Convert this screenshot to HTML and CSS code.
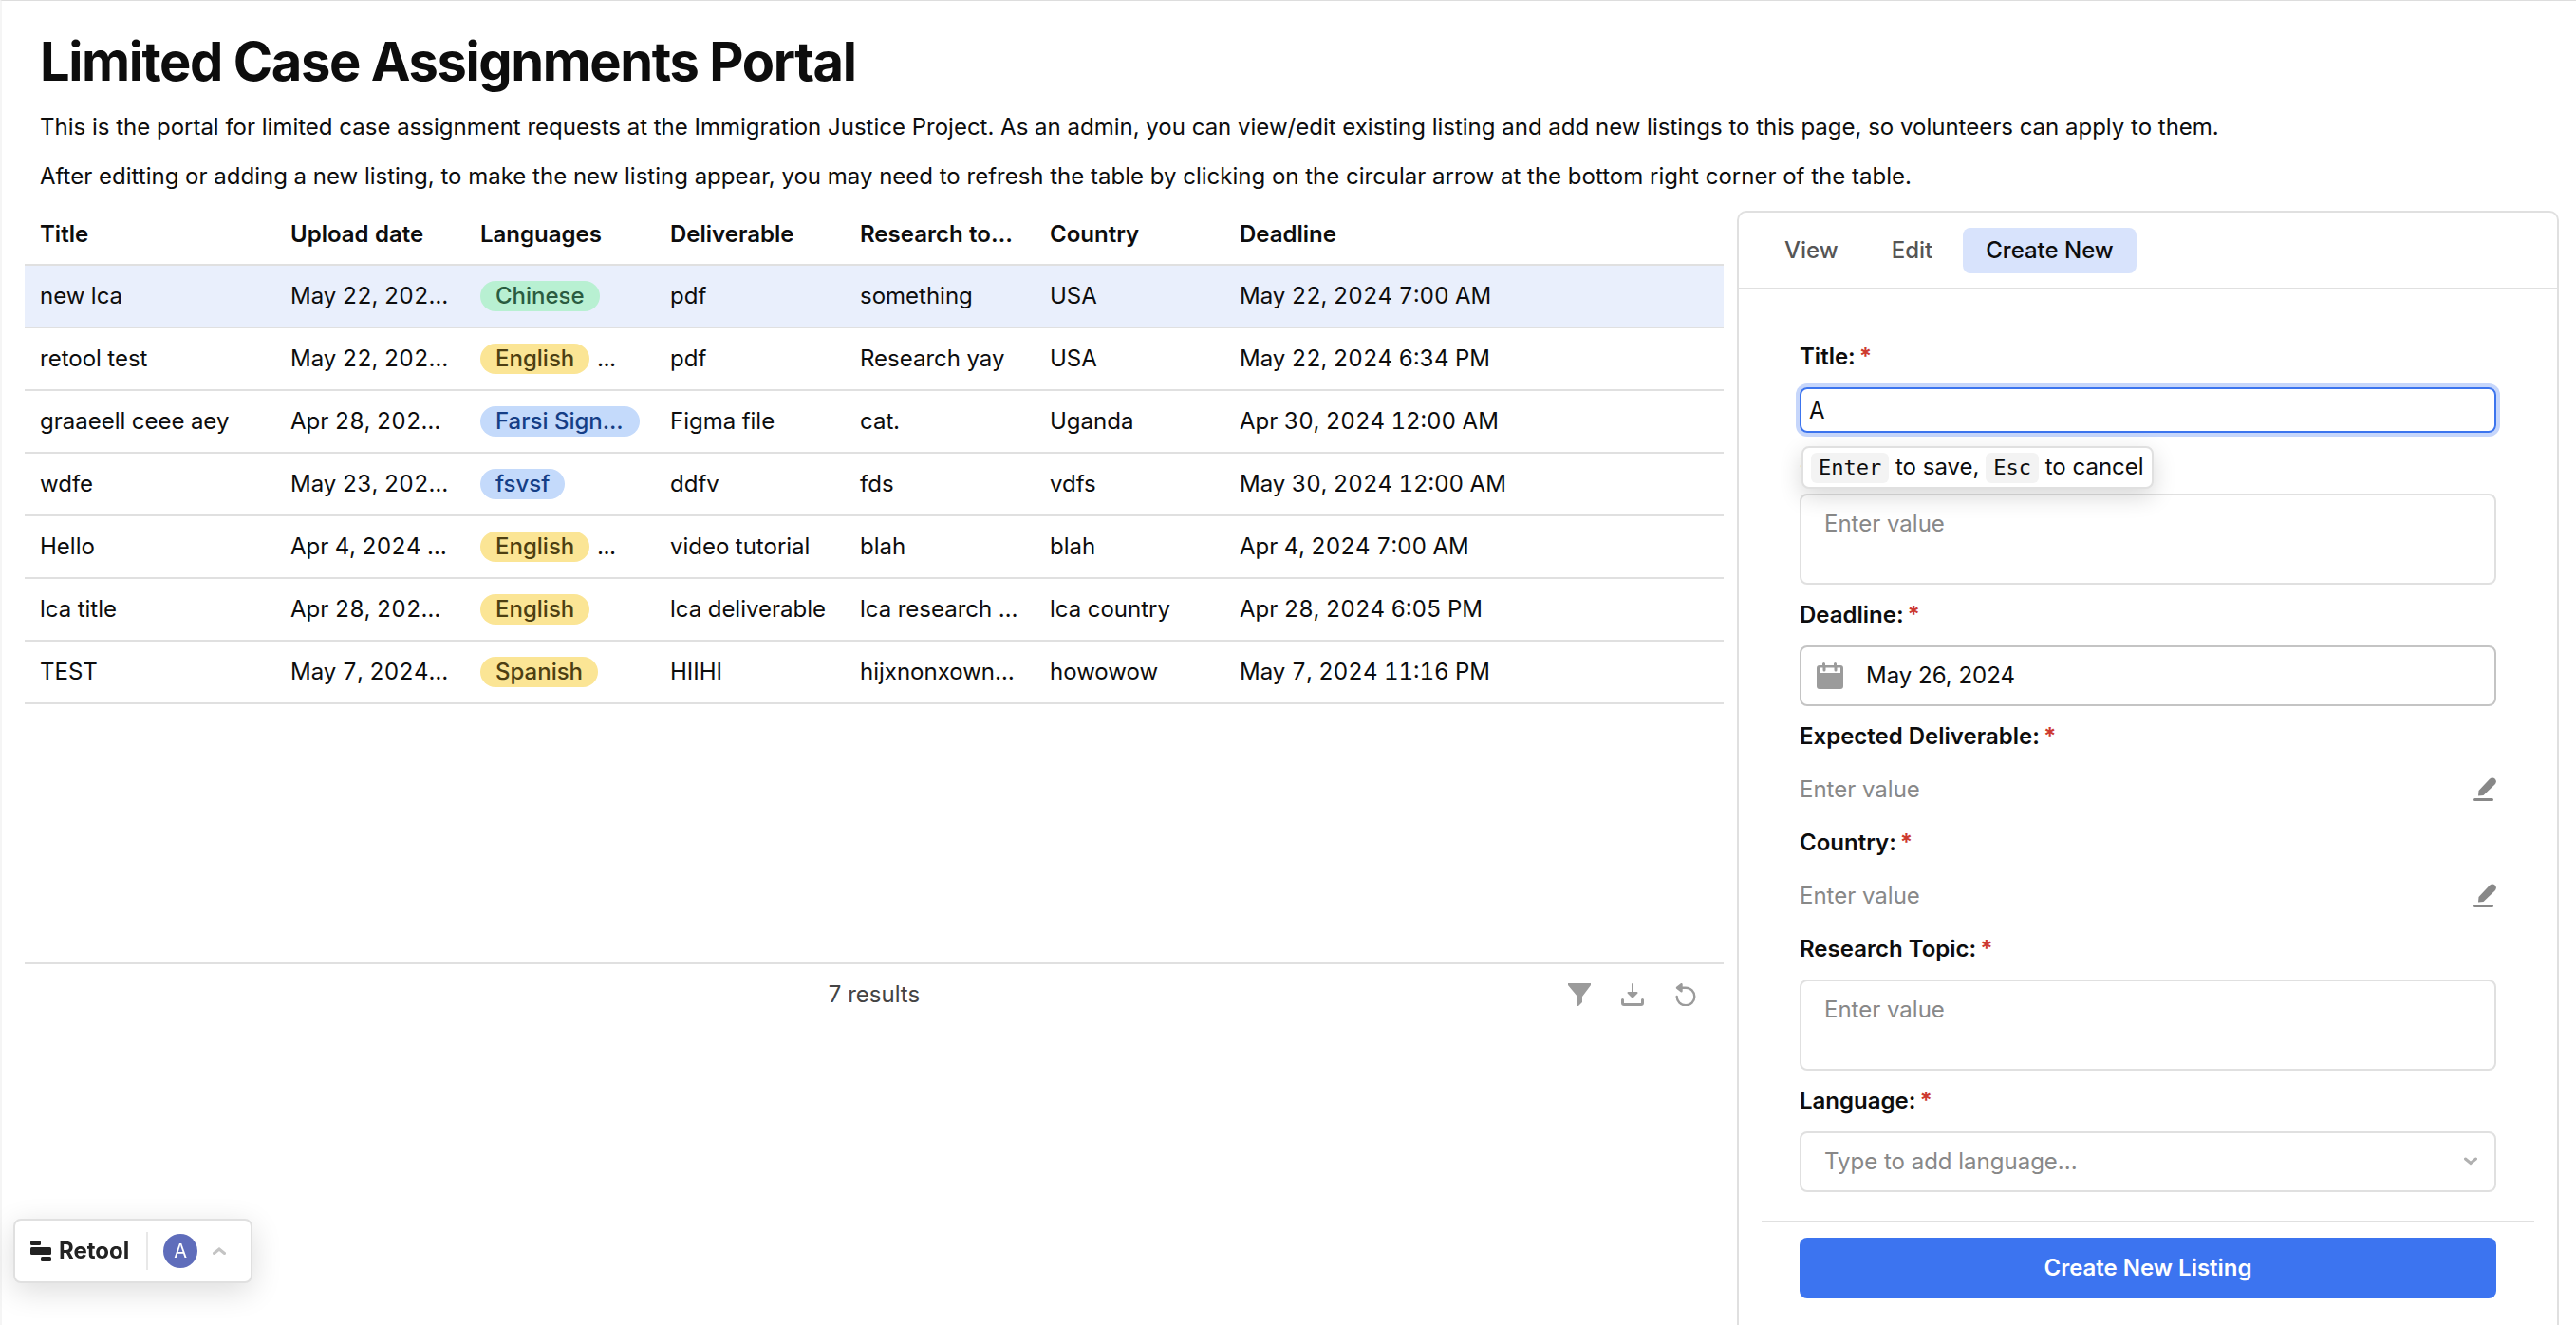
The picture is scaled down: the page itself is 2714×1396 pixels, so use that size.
FILE: index.html
```html
<!DOCTYPE html>
<html lang="en">
<head>
<meta charset="utf-8">
<title>Limited Case Assignments Portal</title>
<link rel="stylesheet" href="styles.css">
</head>
<body>
<div class="app">
  <header class="intro">
    <h1>Limited Case Assignments Portal</h1>
    <p>This is the portal for limited case assignment requests at the Immigration Justice Project. As an admin, you can view/edit existing listing and add new listings to this page, so volunteers can apply to them.</p>
    <p>After editting or adding a new listing, to make the new listing appear, you may need to refresh the table by clicking on the circular arrow at the bottom right corner of the table.</p>
  </header>
  <main class="content">
    <section class="listings">
      <table class="grid">
        <colgroup><col class="col-title"><col class="col"><col class="col"><col class="col"><col class="col"><col class="col"><col></colgroup>
        <thead>
          <tr><th>Title</th><th>Upload date</th><th>Languages</th><th>Deliverable</th><th>Research topic</th><th>Country</th><th>Deadline</th></tr>
        </thead>
        <tbody>
          <tr class="selected"><td>new lca</td><td>May 22, 2024 7:00 AM</td><td><span class="tag green">Chinese</span></td><td>pdf</td><td>something</td><td>USA</td><td>May 22, 2024 7:00 AM</td></tr>
          <tr><td>retool test</td><td>May 22, 2024 6:34 PM</td><td><span class="tag yellow">English</span><span class="more">...</span></td><td>pdf</td><td>Research yay</td><td>USA</td><td>May 22, 2024 6:34 PM</td></tr>
          <tr><td>graaeell ceee aey</td><td>Apr 28, 2024 12:00 AM</td><td><span class="tag blue">Farsi Sign Language</span></td><td>Figma file</td><td>cat.</td><td>Uganda</td><td>Apr 30, 2024 12:00 AM</td></tr>
          <tr><td>wdfe</td><td>May 23, 2024 12:00 AM</td><td><span class="tag blue">fsvsf</span></td><td>ddfv</td><td>fds</td><td>vdfs</td><td>May 30, 2024 12:00 AM</td></tr>
          <tr><td>Hello</td><td>Apr 4, 2024 7:00 AM</td><td><span class="tag yellow">English</span><span class="more">...</span></td><td>video tutorial</td><td>blah</td><td>blah</td><td>Apr 4, 2024 7:00 AM</td></tr>
          <tr><td>lca title</td><td>Apr 28, 2024 6:05 PM</td><td><span class="tag yellow">English</span></td><td>lca deliverable</td><td>lca research topic</td><td>lca country</td><td>Apr 28, 2024 6:05 PM</td></tr>
          <tr><td>TEST</td><td>May 7, 2024 11:16 PM</td><td><span class="tag yellow">Spanish</span></td><td>HIIHI</td><td>hijxnonxownxo</td><td>howowow</td><td>May 7, 2024 11:16 PM</td></tr>
        </tbody>
      </table>
      <footer class="toolbar">
        <span class="count">7 results</span>
        <div class="tools">
          <button type="button" class="icon-btn" aria-label="Filter"><svg width="24" height="24" viewBox="0 0 24 24"><path fill="currentColor" d="M0 0h24v2L15 14v6l-4 4h-1V14L0 2z"/></svg></button>
          <button type="button" class="icon-btn" aria-label="Download"><svg width="24" height="24" viewBox="0 0 24 24" fill="none" stroke="currentColor" stroke-width="2"><path d="M12 1v11" stroke-linecap="round"/><path d="M7.500 10h9L12 14.500z" fill="currentColor" stroke-linejoin="round"/><path d="M1.500 17.500v3.500q0 1.500 1.500 1.500h18q1.500 0 1.500-1.500v-3.500" stroke-width="3" stroke-linecap="round"/></svg></button>
          <button type="button" class="icon-btn" aria-label="Refresh"><svg width="24" height="24" viewBox="0 0 24 24" fill="none" stroke="currentColor" stroke-width="2.400"><path d="M2.700 14A9.300 9.300 0 1 0 12 4.700H5" stroke-linecap="round"/><path d="M3 4.700 7.500 1.200v7z" fill="currentColor" stroke-linejoin="round"/></svg></button>
        </div>
      </footer>
    </section>
    <section class="panel">
      <nav class="tabs">
        <button type="button" class="tab">View</button>
        <button type="button" class="tab">Edit</button>
        <button type="button" class="tab active">Create New</button>
      </nav>
      <form class="form">
        <label for="title">Title:<span class="req">*</span></label>
        <div class="title-field">
          <input id="title" class="editing" type="text" value="A">
          <div class="hint"><kbd>Enter</kbd> to save, <kbd>Esc</kbd> to cancel</div>
        </div>
        <label for="summary">Summary:<span class="req">*</span></label>
        <textarea id="summary" placeholder="Enter value"></textarea>
        <label for="deadline">Deadline:<span class="req">*</span></label>
        <div class="date box">
          <svg width="28" height="28" viewBox="0 0 28 28"><path fill="#9b9b9b" d="M3 3h3V1.500a1.500 1.500 0 0 1 3 0V3h9V1.500a1.500 1.500 0 0 1 3 0V3h4a3 3 0 0 1 3 3v19a3 3 0 0 1-3 3H3a3 3 0 0 1-3-3V6a3 3 0 0 1 3-3zM3 5.500V11h22V5.500h-3.500V8a1.500 1.500 0 0 1-3 0V5.500h-9V8a1.500 1.500 0 0 1-3 0V5.500z"/></svg>
          <input id="deadline" type="text" value="May 26, 2024">
        </div>
        <label for="deliverable">Expected Deliverable:<span class="req">*</span></label>
        <div class="inline">
          <input id="deliverable" type="text" placeholder="Enter value">
          <svg width="24" height="26" viewBox="0 0 24 26" fill="#888"><path d="M5 19.500 5.500 14 17 1.800q3-2.800 5.800 0 2.300 2.900-.3 5.700L10.500 19z"/><rect y="22" width="21" height="3" rx="1.500"/></svg>
        </div>
        <label for="country">Country:<span class="req">*</span></label>
        <div class="inline">
          <input id="country" type="text" placeholder="Enter value">
          <svg width="24" height="26" viewBox="0 0 24 26" fill="#888"><path d="M5 19.500 5.500 14 17 1.800q3-2.800 5.800 0 2.300 2.900-.3 5.700L10.500 19z"/><rect y="22" width="21" height="3" rx="1.500"/></svg>
        </div>
        <label for="topic">Research Topic:<span class="req">*</span></label>
        <textarea id="topic" placeholder="Enter value"></textarea>
        <label for="language">Language:<span class="req">*</span></label>
        <div class="combo box">
          <input id="language" type="text" role="combobox" aria-expanded="false" placeholder="Type to add language...">
          <svg width="14" height="10" viewBox="0 0 14 10" fill="none" stroke="#b0b0b0" stroke-width="3" stroke-linecap="round"><path d="M1.500 2 7 6.500 12.500 2"/></svg>
        </div>
      </form>
      <div class="actions"><button type="button" class="submit">Create New Listing</button></div>
    </section>
  </main>
  <aside class="badge">
    <span class="brand"><svg width="22" height="22" viewBox="0 0 22 22" fill="#222"><rect width="11" height="5" rx="1.500"/><rect y="7" width="22" height="8" rx="1.500"/><rect x="11" y="17" width="11" height="5" rx="1.500"/></svg>Retool</span>
    <span class="avatar">A</span>
    <svg width="14" height="8" viewBox="0 0 14 8" fill="none" stroke="#c4c4c4" stroke-width="3" stroke-linecap="round"><path d="M1.500 6.500 7 2l5.500 4.500"/></svg>
  </aside>
</div>
</body>
</html>
```
FILE: styles.css
```css
* { box-sizing: border-box; }
body { margin: 0; background: #fff; color: #0d0d0d; font: 24px/32px Inter, "Liberation Sans", sans-serif; font-optical-sizing: none; }
button, input, textarea { font: inherit; font-optical-sizing: none; color: inherit; margin: 0; }
button { border: 0; background: none; padding: 0; }
svg { display: block; flex: none; }
.app { height: 100vh; overflow: hidden; display: flex; flex-direction: column; border-top: 1px solid #ddd; border-left: 2px solid #f5f5f5; }

.intro { padding: 29px 40px 0; }
.intro h1 { margin: 0 0 18px; font-size: 56px; line-height: 70px; font-weight: 700; letter-spacing: -0.025em; }
.intro p { margin: 0 0 20px; }

.content { display: flex; gap: 14px; padding: 0 18px 0 24px; flex: 1; align-items: flex-start; }
.listings { flex: 1; min-width: 0; }
.grid { width: 100%; table-layout: fixed; border-collapse: separate; border-spacing: 0; font-variant-numeric: tabular-nums; }
.col-title { width: 264px; }
.col { width: 200px; }
.grid th, .grid td { height: 66px; padding: 0 16px; text-align: left; border-bottom: 2px solid #e0e0e0; white-space: nowrap; overflow: hidden; text-overflow: ellipsis; }
.grid th { height: 58px; padding-bottom: 6px; font-weight: 600; }
.selected td { background: #e9effc; }
.tag { display: inline-block; max-width: 100%; padding: 0 16px; border-radius: 16px; font-weight: 500; overflow: hidden; text-overflow: ellipsis; vertical-align: top; }
.green { background: #b8f0d2; color: #2a5c40; }
.yellow { background: #fbe595; color: #4d3f12; }
.blue { background: #c4dafb; color: #153e86; }
.more { margin-left: 8px; }

.toolbar { display: grid; grid-template-columns: 1fr auto 1fr; align-items: center; margin-top: 272px; padding: 16px 28px; border-top: 2px solid #e0e0e0; }
.count { grid-column: 2; color: #444; }
.tools { justify-self: end; display: flex; gap: 32px; }
.icon-btn { color: #9b9b9b; }

.panel { width: 866px; align-self: stretch; border: 2px solid #e0e0e0; border-bottom: 0; border-radius: 10px 10px 0 0; }
.tabs { display: flex; gap: 8px; padding: 16px 24px 15px; border-bottom: 2px solid #e0e0e0; }
.tab { height: 48px; padding: 0 24px; border-radius: 8px; font-weight: 500; color: #555; }
.tab.active { background: #d8e3fc; color: #0d0d0d; }
.form { display: flex; flex-direction: column; gap: 16px; margin: 0 24px; padding: 55px 40px 30px; border-bottom: 2px solid #e0e0e0; }
label { font-weight: 600; }
.req { margin-left: 4px; color: #cd3a30; font-weight: 700; }
.form input { border: 0; outline: 0; background: none; padding: 0; flex: 1; min-width: 0; }
.form ::placeholder { color: #888; opacity: 1; }
.title-field { position: relative; display: flex; }
.form .editing { height: 48px; padding: 0 8px; border: 2px solid #3c74ee; border-radius: 8px; box-shadow: 0 0 0 4px #c6d6fb; }
.hint { position: absolute; z-index: 1; top: 62px; left: 2px; padding: 4px 8px; border: 2px solid #e0e0e0; border-radius: 8px; background: #fff; white-space: nowrap; box-shadow: 0 8px 24px rgba(0, 0, 0, .16); }
kbd { display: inline-block; padding: 0 8px; border-radius: 6px; background: #f3f3f3; font: 22px/32px "DejaVu Sans Mono", monospace; }
textarea { display: block; height: 96px; padding: 14px 24px; border: 2px solid #e0e0e0; border-radius: 8px; outline: 0; resize: none; }
.box { display: flex; align-items: center; height: 64px; border: 2px solid #e0e0e0; border-radius: 8px; }
.date { gap: 24px; padding: 0 16px; border-color: #c4c4c4; }
.combo { padding: 0 18px 0 24px; }
.inline { display: flex; align-items: center; height: 48px; }
.actions { padding: 16px 64px; }
.submit { width: 100%; height: 64px; border-radius: 8px; background: #3c74f0; color: #fff; font-weight: 600; }

.badge { position: fixed; left: 14px; bottom: 44px; display: flex; align-items: center; gap: 16px; width: 252px; height: 68px; padding: 0 16px; border: 2px solid #e0e0e0; border-radius: 8px; background: #fff; box-shadow: 0 8px 32px rgba(0, 0, 0, .14); }
.brand { display: flex; align-items: center; gap: 8px; height: 40px; padding-right: 18px; border-right: 2px solid #e8e8e8; font-weight: 700; color: #222; }
.avatar { width: 36px; border-radius: 50%; background: #5f6dbb; color: #fff; font-size: 20px; line-height: 36px; text-align: center; }
```
